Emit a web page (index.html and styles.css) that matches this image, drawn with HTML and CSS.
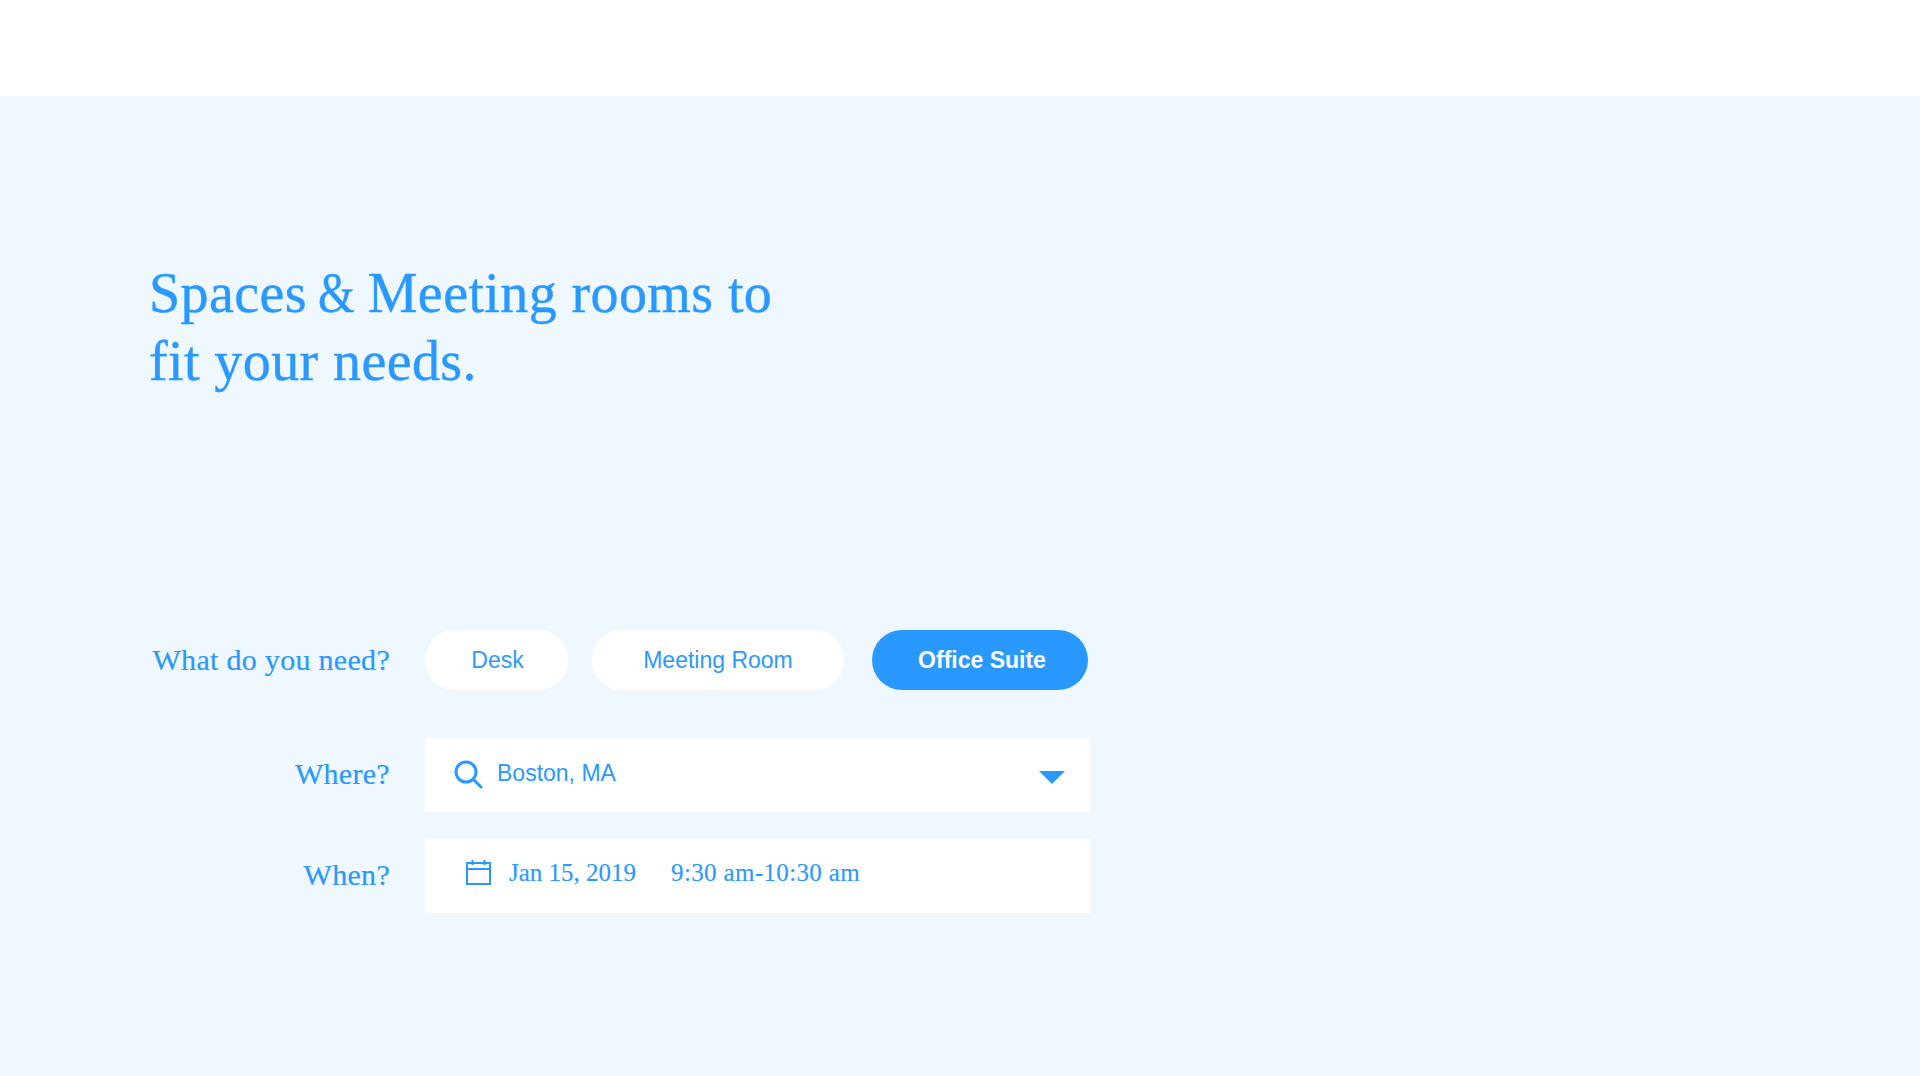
FILE: index.html
```html
<!DOCTYPE html>
<html>
<head>
<link rel="stylesheet" href="styles.css">
</head>
<body>

<div class="topbar"></div>

<main class="hero">
  <h1 class="title">Spaces <span class="amp">&amp;</span> Meeting rooms to<br>fit your needs.</h1>

  <form class="search">
    <div class="row row-type">
      <span class="label">What do you need?</span>
      <div class="pills">
        <button type="button" class="pill pill-desk">Desk</button>
        <button type="button" class="pill pill-room">Meeting Room</button>
        <button type="button" class="pill pill-office">Office Suite</button>
      </div>
    </div>

    <div class="row row-where">
      <span class="label">Where?</span>
      <div class="field field-where">
        <svg class="icon-search" width="30" height="30" viewBox="0 0 30 30" fill="none" stroke="#2999ff" stroke-width="3" stroke-linecap="round">
          <circle cx="13" cy="13" r="10"/>
          <path d="M20.5 20.5L28 28"/>
        </svg>
        <span class="where-text">Boston, MA</span>
        <span class="caret"></span>
      </div>
    </div>

    <div class="row row-when">
      <span class="label">When?</span>
      <div class="field field-when">
        <svg class="icon-cal" width="25" height="25" viewBox="0 0 25 25" fill="none" stroke="#2999ff" stroke-width="2">
          <rect x="1" y="3" width="23" height="21"/>
          <path d="M1 9H24M6.5 0V5M18.5 0V5"/>
        </svg>
        <span class="when-date">Jan 15, 2019</span>
        <span class="when-time">9:30 am-10:30 am</span>
      </div>
    </div>
  </form>
</main>

</body>
</html>
```

FILE: styles.css
```css
html, body {
    margin: 0;
    padding: 0;
}

body {
    background-color: #ffffff;
    color: #2999ff;
    font-family: "Liberation Serif", serif;
}

.topbar {
    height: 96px;
    background-color: #ffffff;
}

.hero {
    height: 980px;
    box-sizing: border-box;
    padding: 163px 0 0 149px;
    background-color: #f0f8ff;
}

.title {
    margin: 0;
    font-size: 56px;
    line-height: 68px;
    font-weight: normal;
    letter-spacing: 0.4px;
    -webkit-text-stroke: 0.4px #2999ff;
}

/* the ampersand runs wide in this font */
.amp {
    display: inline-block;
    transform: scaleX(0.84);
    transform-origin: left center;
    margin-left: -3px;
    margin-right: -9px;
}

.search {
    margin-top: 235px;
    width: 941px;
}

.row {
    display: flex;
    align-items: center;
}

.row-where {
    margin-top: 48px;
}

.row-when {
    margin-top: 27px;
}

.label {
    width: 241px;
    margin-right: 35px;
    text-align: right;
    font-size: 30px;
    letter-spacing: 0.3px;
    -webkit-text-stroke: 0.2px #2999ff;
}

.row-where .label,
.row-when .label {
    margin-top: -3px;
}

.pills {
    display: flex;
}

.pill {
    height: 60px;
    border: none;
    border-radius: 30px;
    background-color: #ffffff;
    color: #2999ff;
    font-family: "Liberation Sans", Arial, sans-serif;
    font-size: 23px;
    padding: 0;
}

.pill-desk {
    width: 143px;
    margin-right: 24px;
    padding-left: 2px;
}

.pill-room {
    width: 252px;
    margin-right: 28px;
}

.pill-office {
    width: 216px;
    padding-left: 4px;
    background-color: #2999ff;
    color: #ffffff;
    font-weight: bold;
}

.field {
    display: flex;
    align-items: center;
    width: 665px;
    height: 74px;
    background-color: #ffffff;
}

.field-where {
    padding-left: 28px;
    box-sizing: border-box;
    font-family: "Liberation Sans", Arial, sans-serif;
    font-size: 23px;
}

.icon-search {
    margin-top: -2px;
}

.where-text {
    margin-left: 14px;
    margin-top: -3px;
}

.caret {
    margin-left: auto;
    margin-right: 25px;
    margin-top: 4px;
    border-left: 13px solid transparent;
    border-right: 13px solid transparent;
    border-top: 13px solid #2999ff;
}

.field-when {
    padding-left: 41px;
    box-sizing: border-box;
    font-size: 25px;
    -webkit-text-stroke: 0.15px #2999ff;
}

.icon-cal {
    margin-top: -7px;
}

.when-date {
    margin-left: 18px;
    margin-top: -7px;
}

.when-time {
    margin-left: 35px;
    margin-top: -7px;
    letter-spacing: 0.35px;
}
```
